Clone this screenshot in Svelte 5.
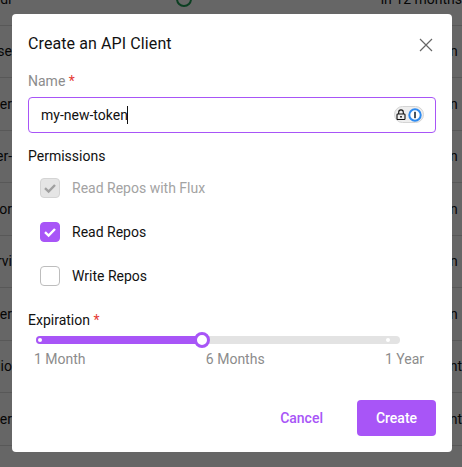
<script>
  const rows = [
    ['services.ldi', 'in 12 months'],
    ['base', 'in 12 mon'],
    ['user', 'in 12 mon'],
    ['user-', 'in 12 mon'],
    ['for', 'in 12 mon'],
    ['servi', 'in 12 mon'],
    ['user', 'in 12 mon'],
    ['radio', 'in 12 mont'],
    ['user', 'in 12 mont']
  ];
  let name = $state('my-new-token');
</script>

<div class="page">
  <div class="table">
    {#each rows as row, i}
      <div class="row">
        <span class="left"><span>{row[0]}</span></span>
        <span class="status">{#if i === 0}<span class="ok"></span>{/if}</span>
        <span class="right">{row[1]}</span>
      </div>
    {/each}
  </div>

  <div class="scrim"></div>

  <div class="modal">
    <header>
      <h2>Create an API Client</h2>
      <button class="close" aria-label="Close">
        <svg viewBox="0 0 14 14" width="14" height="14"><path d="M1 1 13 13M13 1 1 13" fill="none" stroke="#666" stroke-width="1.2"/></svg>
      </button>
    </header>

    <div class="name-label">Name <em>*</em></div>
    <div class="input">
      <input bind:value={name} aria-label="Name" />
      <span class="caret"></span>
      <span class="op">
        <svg viewBox="0 0 10 11" width="10" height="11"><path d="M2.7 5V3.2a2.3 2.3 0 0 1 4.6 0V5" fill="none" stroke="#111" stroke-width="1.1"/><rect x="1" y="5" width="8" height="5.5" rx=".8" fill="none" stroke="#111" stroke-width="1.1"/><rect x="4.2" y="7" width="1.6" height="1.6" fill="#111"/></svg>
        <svg viewBox="0 0 14 14" width="14" height="14"><circle cx="7" cy="7" r="5.7" fill="#fff" stroke="#2e8bf0" stroke-width="2"/><rect x="6.2" y="3.8" width="1.6" height="6.4" fill="#1c2b3a"/></svg>
      </span>
    </div>

    <div class="perm-label">Permissions</div>
    <div class="checks">
      <label class="check disabled">
        <span class="box"><svg viewBox="0 0 20 20" width="20" height="20"><path d="M5 10.2 8.6 13.6 15 7" fill="none" stroke="#a0a0a0" stroke-width="2.4"/></svg></span>
        Read Repos with Flux
      </label>
      <label class="check on">
        <span class="box"><svg viewBox="0 0 20 20" width="20" height="20"><path d="M5 10.2 8.6 13.6 15 7" fill="none" stroke="#fff" stroke-width="2.4"/></svg></span>
        Read Repos
      </label>
      <label class="check">
        <span class="box"></span>
        Write Repos
      </label>
    </div>

    <div class="exp-label">Expiration <em>*</em></div>
    <div class="slider">
      <div class="track">
        <div class="fill"></div>
        <span class="dot first"></span>
        <span class="dot last"></span>
        <span class="thumb"></span>
      </div>
      <div class="marks">
        <span>1 Month</span>
        <span>6 Months</span>
        <span>1 Year</span>
      </div>
    </div>

    <footer>
      <button class="cancel">Cancel</button>
      <button class="create">Create</button>
    </footer>
  </div>
</div>

<style>
  :global(body) {
    margin: 0;
    font-family: Roboto, "Liberation Sans", sans-serif;
    overflow: hidden;
  }
  .page {
    position: relative;
    width: 462px;
    height: 467px;
    overflow: hidden;
    background: #fff;
  }
  .table {
    margin-top: -27px;
  }
  .row {
    display: flex;
    box-sizing: border-box;
    height: 52.5px;
    align-items: center;
    border-bottom: 1px solid #ddd;
    font-size: 14px;
    color: #111;
    white-space: nowrap;
  }
  .left {
    width: 12px;
    display: flex;
    justify-content: flex-end;
    overflow: hidden;
  }
  .status {
    width: 384px;
    display: flex;
    justify-content: center;
    padding-right: 24px;
    box-sizing: border-box;
  }
  .ok {
    box-sizing: border-box;
    display: block;
    width: 16px;
    height: 16px;
    margin-left: 0;
    border: 2px solid #1f9d55;
    border-radius: 50%;
  }
  .right {
    flex: none;
  }
  .scrim {
    position: absolute;
    inset: 0;
    background: rgba(0, 0, 0, 0.6);
  }
  .modal {
    position: absolute;
    left: 12px;
    top: 14px;
    width: 440px;
    height: 438px;
    box-sizing: border-box;
    padding: 16px;
    background: #fff;
    border-radius: 4px;
    display: flex;
    flex-direction: column;
    color: #111;
  }
  header {
    display: flex;
    align-items: center;
    justify-content: space-between;
    height: 28px;
  }
  h2 {
    margin: 0;
    font-size: 16px;
    font-weight: 400;
    line-height: 28px;
    letter-spacing: 0.1px;
  }
  .close {
    border: 0;
    padding: 0;
    background: none;
    width: 14px;
    height: 14px;
    margin-right: 3px;
    margin-top: 2px;
    display: block;
  }
  .close svg, .box svg, .op svg { display: block; }
  .name-label {
    margin-top: 13px;
    font-size: 14px;
    line-height: 20px;
    color: #8c8c8c;
  }
  em {
    font-style: normal;
    color: #e53935;
  }
  .input {
    position: relative;
    margin-top: 6px;
    height: 36px;
    box-sizing: border-box;
    border: 1px solid #a855f7;
    border-radius: 4px;
    display: flex;
    align-items: center;
    padding: 0 12px;
  }
  .input input {
    flex: 1;
    min-width: 0;
    border: 0;
    outline: 0;
    padding: 0;
    background: none;
    font: inherit;
    font-size: 14px;
    color: #111;
  }
  .caret {
    position: absolute;
    left: 98px;
    top: 8px;
    width: 1px;
    height: 18px;
    background: #111;
  }
  .op {
    position: absolute;
    right: 11px;
    top: 8px;
    width: 30px;
    height: 17px;
    box-sizing: border-box;
    border: 1px solid #d4d4d4;
    border-radius: 9px;
    background: #eee;
    display: flex;
    align-items: center;
    justify-content: flex-end;
    gap: 2px;
    padding-right: 1px;
  }
  .perm-label {
    margin-top: 13px;
    font-size: 14px;
    line-height: 20px;
  }
  .checks {
    margin-top: 12px;
    padding-left: 12px;
    display: flex;
    flex-direction: column;
    gap: 24px;
  }
  .check {
    display: flex;
    align-items: center;
    gap: 12px;
    height: 20px;
    font-size: 14px;
    color: #111;
  }
  .box {
    box-sizing: border-box;
    width: 20px;
    height: 20px;
    border: 1px solid #bdbdbd;
    border-radius: 4px;
    background: #fff;
    display: flex;
    align-items: center;
    justify-content: center;
  }
  .box svg { flex: none; }
  .check.disabled { color: #a3a3a3; }
  .check.disabled .box { background: #e5e5e5; border-color: #d4d4d4; }
  .check.on .box { background: #a855f7; border-color: #a855f7; }
  .exp-label {
    margin-top: 24px;
    font-size: 14px;
    line-height: 20px;
  }
  .slider {
    margin-top: 6px;
    padding: 0 4px;
  }
  .track {
    position: relative;
    margin: 0 0 0 4px;
    width: 364px;
    height: 8px;
    border-radius: 4px;
    background: #e3e3e3;
  }
  .fill {
    height: 100%;
    width: 165px;
    border-radius: 4px;
    background: #a855f7;
  }
  .dot {
    position: absolute;
    top: 2px;
    width: 4px;
    height: 4px;
    border-radius: 50%;
    background: #fff;
  }
  .dot.first { left: 2px; }
  .dot.last { right: 10px; }
  .thumb {
    position: absolute;
    left: 158px;
    top: -4px;
    box-sizing: border-box;
    width: 16px;
    height: 16px;
    border: 3px solid #a855f7;
    border-radius: 50%;
    background: #fff;
  }
  .marks {
    display: flex;
    justify-content: space-between;
    margin-top: 5px;
    padding: 0 4px 0 2px;
    font-size: 14px;
    line-height: 20px;
    color: #8c8c8c;
    width: 396px;
    box-sizing: border-box;
  }
  footer {
    margin-top: auto;
    display: flex;
    justify-content: flex-end;
    align-items: center;
    gap: 34px;
  }
  footer button {
    border: 0;
    font: inherit;
    font-size: 14px;
    font-weight: 500;
  }
  .cancel {
    background: none;
    padding: 0;
    color: #a855f7;
  }
  .create {
    width: 79px;
    height: 36px;
    border-radius: 4px;
    background: #a855f7;
    color: #fff;
  }
</style>
